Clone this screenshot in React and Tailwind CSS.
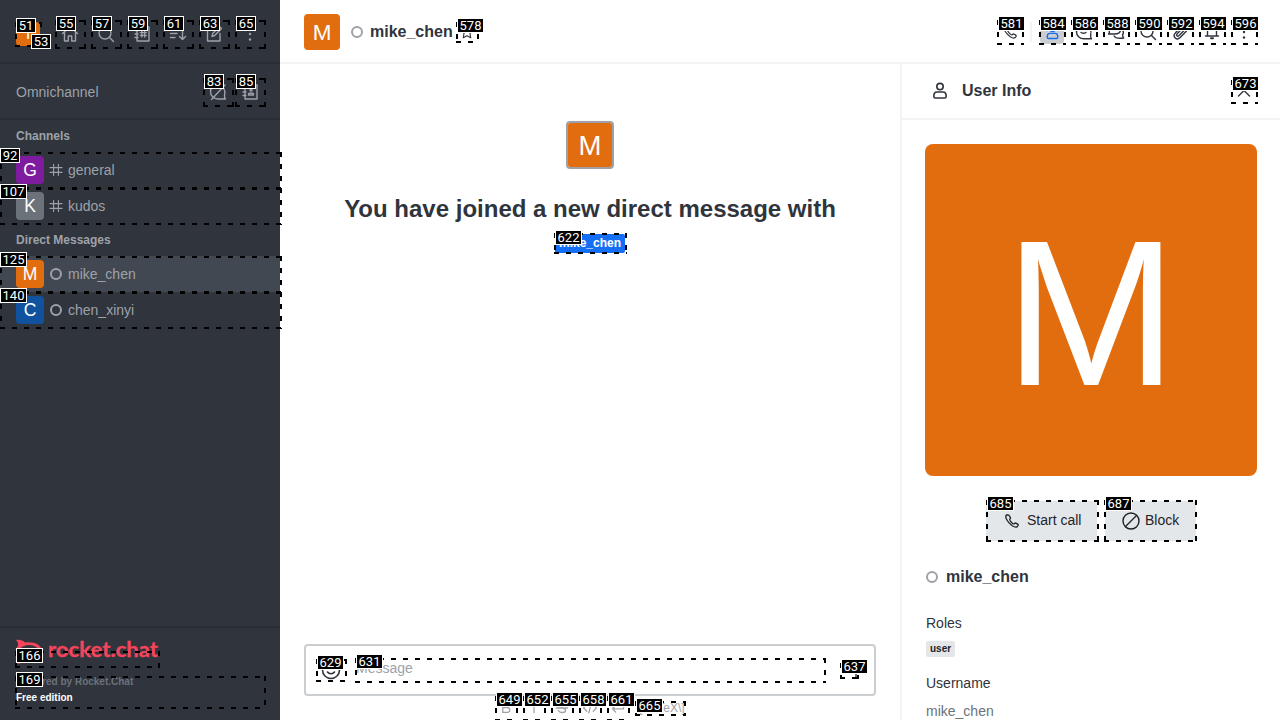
import React from "react";

const MARKS = [
  [51, 15, 22, 27, 25], [53, 30, 38, 0, 0], [55, 55, 20, 31, 29], [57, 91, 20, 31, 29], [59, 127, 20, 31, 29],
  [61, 163, 20, 31, 29], [63, 199, 20, 31, 29], [65, 235, 20, 31, 29], [83, 203, 78, 31, 29], [85, 235, 78, 31, 29],
  [92, 0, 152, 282, 37], [107, 0, 188, 282, 37], [125, 0, 256, 282, 37], [140, 0, 292, 282, 37],
  [166, 15, 651, 145, 17], [169, 15, 676, 251, 33], [578, 456, 22, 23, 21], [581, 997, 20, 27, 25],
  [584, 1039, 20, 27, 25], [586, 1071, 20, 27, 25], [588, 1103, 20, 27, 25], [590, 1135, 20, 27, 25],
  [592, 1167, 20, 27, 25], [594, 1199, 20, 27, 25], [596, 1231, 20, 27, 25], [622, 554, 233, 73, 21],
  [629, 316, 659, 31, 23], [631, 355, 658, 471, 25], [637, 840, 663, 19, 16], [649, 495, 696, 23, 25],
  [652, 523, 696, 23, 25], [655, 551, 696, 23, 25], [658, 579, 696, 23, 25], [661, 607, 696, 23, 25],
  [665, 635, 701, 51, 15], [673, 1231, 80, 27, 24], [685, 986, 500, 113, 42], [687, 1104, 500, 93, 42],
];

const LABEL_TOP = { 166: 648, 622: 230, 629: 655, 665: 698 };

function Mark({ m: [id, x, y, w, h] }) {
  return (
    <>
      {w > 0 && (
        <svg className="absolute" style={{ left: x, top: y }} width={w} height={h} stroke="#000" strokeWidth="2" strokeDasharray="5 7" shapeRendering="crispEdges">
          <path d={`M0 1H${w}M0 ${h - 1}H${w}M1 0V${h}M${w - 1} 0V${h}`} />
        </svg>
      )}
      <div
        className="absolute z-10 flex h-[15px] items-center justify-center border border-white bg-black text-[13px] leading-none text-white [font-family:Roboto,sans-serif]"
        style={{ left: x > 0 ? x + 1 : 0, top: LABEL_TOP[id] ?? y - 4, width: id < 100 ? 20 : 27 }}
      >
        {id}
      </div>
    </>
  );
}

const PATHS = {
  home: <path d="M2.500 9.500 10 3l7.500 6.500M4.500 8v9h3.800v-5h3.400v5h3.800V8" />,
  search: <><circle cx="9" cy="9" r="6" /><path d="m13.500 13.500 4 4" /></>,
  directory: <><path d="M5 3h12v14H5zM3 6.500h3M3 10h3M3 13.500h3M9.800 7v6M12.700 7v6M8.300 8.600h6M8.300 11.400h6" /></>,
  sort: <path d="M2.500 5.500h9M2.500 9.500h6.500M2.500 13.500h4.500M14.500 4.500v11M11.500 12.500l3 3 3-3" />,
  edit: <path d="M11 4H3.500v13h12.500V9.500M8 12.500l.7-3L15.500 2.500l2 2-6.800 7z" />,
  kebab: <g fill="currentColor" stroke="none"><circle cx="10" cy="4.500" r="1.200" /><circle cx="10" cy="10" r="1.200" /><circle cx="10" cy="15.500" r="1.200" /></g>,
  chatOff: <><path d="M16.500 13.500C18 9 15.500 3 10 3S2.500 6.500 2.500 10s3 7 7.500 7h7.500c-1-1-1.200-2-1-3.500" /><path d="M3.500 17.500 17 3" /></>,
  contact: <><path d="M5 3h12v14H5zM3 6.500h3M3 10h3M3 13.500h3M8.500 13h5v-.8c0-1-1-1.200-2.500-1.200s-2.500.2-2.500 1.200z" /><circle cx="11" cy="8" r="1" /></>,
  hash: <path d="M7 3v14M13 3v14M2.500 7h15M2.500 13h15" />,
  star: <path d="m10 2.500 2.300 4.900 5.200.7-3.800 3.700 1 5.400-4.700-2.600-4.700 2.600 1-5.400L2.500 8.100l5.200-.7z" />,
  phone: <path d="M4 3.200C2.300 4.500 3 8 6.500 11.800s7.300 5.700 9.300 4.400l1-1.400c.2-.5 0-1-.5-1.300l-2-1.200c-.6-.3-1 0-1.700.7-.7.600-1.700 0-3.300-1.700S7 8.700 7.600 8c.7-.7.900-1.100.6-1.700L7 4.200c-.3-.6-.7-.9-1.300-.9z" />,
  user: <><circle cx="10" cy="5.600" r="3.200" /><path d="M3.800 15.200c0-2.800 1.300-4.200 3.200-4.200h6c1.900 0 3.200 1.400 3.200 4.200 0 1.300-.5 1.800-1.500 1.800H5.300c-1 0-1.500-.5-1.500-1.800z" /></>,
  chat: <><path d="M16.700 13C18 8.500 15.500 3 10 3S2.500 6.500 2.500 10s3 6.800 7.500 6.800h7.500c-1-1-1.200-2-.8-3.800" /><path d="M7 10.500c1.500 1 3.500 1 5 0" /></>,
  threads: <path d="M6 12H2.500c1.200-1 1.200-1.800.8-3C2.500 5.500 5 3 8.500 3s6 2 6 4.700S12 12 8.500 12zM15.500 7.500c2 1.300 2.300 3.500 1 5.500.1 1.300.5 2 1.200 3-4 .5-8 1-9.500-2" />,
  clip: <path d="m16.500 9-6.300 6.600c-3.600 3.300-8-1-4.900-4.500L12 4c2.500-2.200 5.300.7 3.200 3.200l-6.300 6.500c-1.500 1.300-3.100-.4-1.900-1.800L12.500 6.200" />,
  bell: <><path d="M3.500 14h13M5.500 14V8.500C5.500 5.500 7.500 3.500 10 3.500s4.500 2 4.500 5V14" /><path d="M9 16.300h2" strokeWidth="2" /></>,
  close: <path d="m4.500 4 11 11M15.500 4l-11 11" />,
  block: <><circle cx="10" cy="10" r="8" /><path d="M4.500 15.500l11-11" /></>,
  smile: <><circle cx="10" cy="10" r="8.500" /><path d="M6.500 12c1.500 2.300 5.500 2.300 7 0M7 7v1M13 7v1" /></>,
  bold: <path d="M6 4h5c4 0 4 5.500 0 5.500H6zM6 9.500h5.500c4.500 0 4.500 6 0 6H6z" />,
  italic: <path d="M10 4v12" />,
  strike: <path d="M14 6c-1-3-8-3-8 .5 0 4 8.500 2.500 8.500 6.500 0 3.500-7.500 3.500-9 0M3 10h14" />,
  code: <path d="m6 6-4 4 4 4M14 6l4 4-4 4M11.500 4l-3 12" />,
  enter: <path d="M17 5v6H3M7 7l-4 4 4 4" />,
};

function Icon({ name, size = 20, sw = 1.4, className = "" }) {
  return (
    <svg viewBox="0 0 20 20" width={size} height={size} fill="none" stroke="currentColor" strokeWidth={sw} strokeLinecap="round" strokeLinejoin="round" className={`shrink-0 ${className}`}>
      {PATHS[name]}
    </svg>
  );
}

function Avatar({ letter, size, color, className = "" }) {
  return (
    <svg viewBox="0 0 200 200" width={size} height={size} className={`shrink-0 ${className}`}>
      <rect width="200" height="200" fill={color} />
      <text x="100" y="100" dy="0.36em" textAnchor="middle" fontSize="125" fill="#fff">{letter}</text>
    </svg>
  );
}

const Ring = ({ className = "" }) => <span className={`size-3 shrink-0 rounded-full border-2 border-[#9ea2a8] ${className}`} />;

function Row({ letter, color, name, channel, active }) {
  return (
    <div className={`flex h-9 items-center px-4 ${active ? "bg-[#414852]" : ""}`}>
      <Avatar letter={letter} size={28} color={color} className="rounded" />
      <span className="ml-1 flex w-4 justify-center">{channel ? <Icon name="hash" size={16} /> : <Ring />}</span>
      <span className="ml-1 text-sm">{name}</span>
    </div>
  );
}

function Sidebar() {
  return (
    <aside className="flex w-[280px] shrink-0 flex-col bg-[#2f343d] text-[#9ea2a8]">
      <div className="flex h-16 items-center border-b-2 border-[#282c34] px-4 pt-[6px]">
        <Avatar letter="T" size={24} color="#e26d0e" className="rounded" />
        <div className="ml-4 flex gap-2">
          {["home", "search", "directory", "sort", "edit", "kebab"].map((n) => (
            <span key={n} className="flex size-7 items-center justify-center"><Icon name={n} /></span>
          ))}
        </div>
      </div>
      <div className="flex h-14 items-center justify-between border-b-2 border-[#282c34] pr-4 pl-4 pt-[2px]">
        <span className="text-sm">Omnichannel</span>
        <div className="flex gap-1">
          <span className="flex size-7 items-center justify-center"><Icon name="chatOff" /></span>
          <span className="flex size-7 items-center justify-center"><Icon name="contact" /></span>
        </div>
      </div>
      <div className="flex-1">
        <h3 className="flex h-8 items-center px-4 text-xs font-bold">Channels</h3>
        <Row letter="G" color="#7f1b9f" name="general" channel />
        <Row letter="K" color="#6c727a" name="kudos" channel />
        <h3 className="flex h-8 items-center px-4 text-xs font-bold">Direct Messages</h3>
        <Row letter="M" color="#e26d0e" name="mike_chen" active />
        <Row letter="C" color="#10529e" name="chen_xinyi" />
      </div>
      <div className="h-[94px] border-t-2 border-[#282c34] px-4 pt-[11px]">
        <svg width="146" height="26" viewBox="0 0 146 26" className="overflow-visible">
          <path d="M0 1c4-.5 7 .5 9 2.500 8-1.500 17 2 17 8.500s-8 11-17 9.500C7 24 4 25 0 24.500c2-2 2.500-4 1.800-6C-.5 15-.5 10 1.800 7 2.500 5 2 3 0 1z" fill="#f5455c" />
          <ellipse cx="13" cy="12.500" rx="10" ry="6.500" fill="#2f343d" />
          <text x="32" y="18" textLength="110" lengthAdjust="spacingAndGlyphs" fill="#f5455c" stroke="#f5455c" strokeWidth="0.3" className="text-[21px] font-bold [font-family:Lato,sans-serif]">rocket.chat</text>
        </svg>
        <div className="mt-[9px] text-[10px] leading-4 font-bold text-[#6c727a]">Powered by Rocket.Chat</div>
        <div className="text-[10px] leading-4 font-bold text-white">Free edition</div>
      </div>
    </aside>
  );
}

function Header() {
  return (
    <header className="flex h-16 shrink-0 items-center border-b-2 border-[#f2f3f5] px-6 pt-[2px]">
      <Avatar letter="M" size={36} color="#e26d0e" className="rounded" />
      <Ring className="ml-[11px]" />
      <h1 className="ml-[7px] -mt-px text-base font-bold">mike_chen</h1>
      <Icon name="star" size={16} className="ml-[6px]" />
      <div className="ml-auto flex items-center gap-2">
        <span className="flex size-6 items-center justify-center"><Icon name="phone" size={18} /></span>
        <span className="h-5 w-[2px] bg-[#f2f3f5]" />
        <span className="flex size-6 items-center justify-center rounded bg-[#cbced1] text-[#156ff5]"><Icon name="user" size={17} sw={1.700} /></span>
        {["chat", "threads", "search", "clip", "bell", "kebab"].map((n) => (
          <span key={n} className="flex size-6 items-center justify-center"><Icon name={n} /></span>
        ))}
      </div>
    </header>
  );
}

function Conversation() {
  return (
    <main className="flex min-w-0 flex-1 flex-col px-6">
      <div className="flex flex-1 flex-col items-center pt-[57px]">
        <Avatar letter="M" size={48} color="#e26d0e" className="rounded border-2 border-[#9ea2a8]" />
        <h2 className="mt-6 text-2xl font-bold">You have joined a new direct message with</h2>
        <span className="mt-[9px] flex h-[19px] items-center rounded-xs bg-[#156ff5] px-1 pb-[2px] text-xs font-bold text-white">mike_chen</span>
      </div>
      <div className="flex h-[52px] shrink-0 items-center rounded border-2 border-[#cbced1] pr-[17px] pl-[15px]">
        <Icon name="smile" size={20} sw={1.600} />
        <span className="ml-[15px] pb-1 text-sm text-[#9ea2a8]">Message</span>
        <span className="ml-auto h-4 w-[2px] bg-[#6c727a]" />
      </div>
      <div className="flex h-6 shrink-0 items-center pl-[194px] text-[#9ea2a8]">
        <div className="flex gap-3">
          {["bold", "italic", "strike", "code", "enter"].map((n) => <Icon key={n} name={n} size={16} sw={1.600} />)}
        </div>
        <span className="ml-[10px] text-xs">\[KaTeX\]</span>
      </div>
    </main>
  );
}

function UserInfo() {
  return (
    <aside className="flex w-[380px] shrink-0 flex-col border-l-2 border-[#f2f3f5]">
      <div className="flex h-14 shrink-0 items-center border-b-2 border-[#f2f3f5] pr-6 pl-7">
        <Icon name="user" size={20} sw={1.600} />
        <h2 className="ml-3 text-base font-bold">User Info</h2>
        <span className="ml-auto flex size-6 items-center justify-center"><Icon name="close" /></span>
      </div>
      <div className="flex flex-col items-center pt-6">
        <Avatar letter="M" size={332} color="#e26d0e" className="rounded-lg" />
        <div className="mt-[25px] flex gap-2 text-sm text-[#1f2329]">
          <span className="flex h-10 w-[111px] items-center rounded bg-[#e4e7ea] pl-[17px]"><Icon name="phone" size={18} sw={1.500} /><span className="ml-[6px] pb-[2px]">Start call</span></span>
          <span className="flex h-10 w-[91px] items-center rounded bg-[#e4e7ea] pl-4"><Icon name="block" sw={1.400} /><span className="ml-[4px] pb-[2px]">Block</span></span>
        </div>
      </div>
      <div className="flex flex-col items-start px-6 text-sm">
        <div className="mt-6 flex h-6 items-center"><Ring /><span className="ml-2 text-base font-bold">mike_chen</span></div>
        <span className="mt-6 leading-5">Roles</span>
        <span className="mt-2 h-4 rounded-xs bg-[#e4e7ea] px-1 text-[10px] leading-4 font-bold text-[#1f2329]">user</span>
        <span className="mt-4 leading-5">Username</span>
        <span className="mt-2 leading-5 text-[#6c727a]">mike_chen</span>
      </div>
    </aside>
  );
}

export default function App() {
  return (
    <div className="relative flex h-[720px] w-[1280px] overflow-hidden bg-white text-[#2f343d] [font-family:'Liberation_Sans',sans-serif]">
      <Sidebar />
      <div className="flex min-w-0 flex-1 flex-col">
        <Header />
        <div className="flex min-h-0 flex-1">
          <Conversation />
          <UserInfo />
        </div>
      </div>
      {MARKS.map((m) => <Mark key={m[0]} m={m} />)}
    </div>
  );
}
